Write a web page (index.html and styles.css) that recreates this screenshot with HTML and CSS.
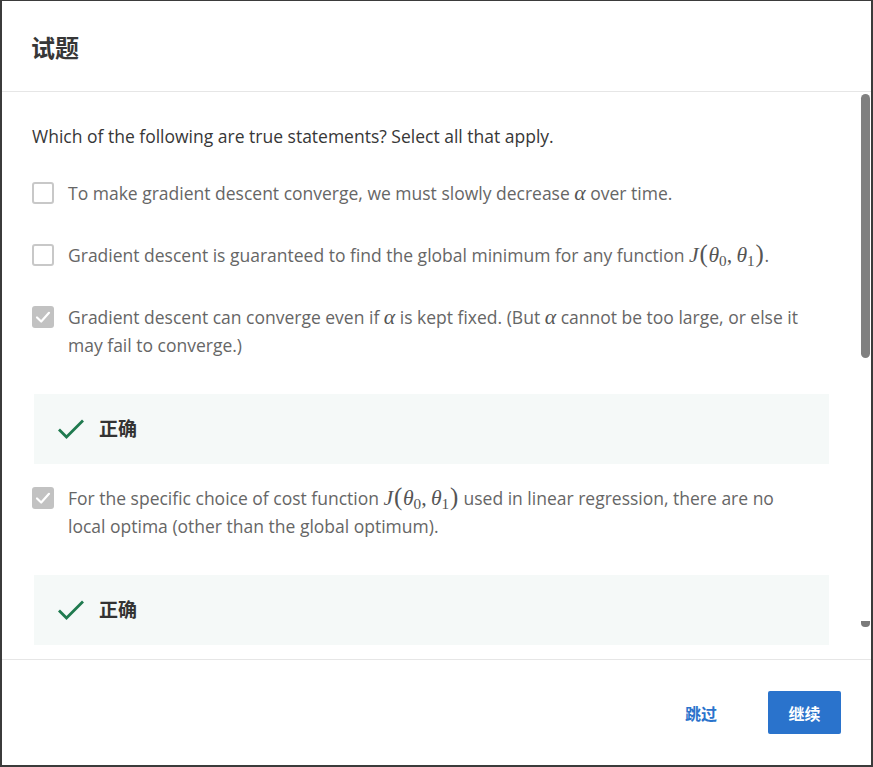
FILE: index.html
```html
<!DOCTYPE html>
<html lang="zh">
<head>
<meta charset="utf-8">
<title>试题</title>
<link rel="stylesheet" href="styles.css">
</head>
<body>
<div class="modal">
  <header class="modal-head">
    <h2 class="title">试题</h2>
  </header>
  <div class="modal-body">
    <div class="scroll">
      <p class="question">Which of the following are true statements? Select all that apply.</p>

      <div class="option">
        <span class="box"></span>
        <div class="opt-text">To make gradient descent converge, we must slowly decrease <span class="math"><i>α</i></span> over time.</div>
      </div>

      <div class="option">
        <span class="box"></span>
        <div class="opt-text">Gradient descent is guaranteed to find the global minimum for any function <span class="math"><i>J</i><span class="paren">(</span><i>θ</i><sub>0</sub>,<i class="th2">θ</i><sub>1</sub><span class="paren">)</span></span>.</div>
      </div>

      <div class="option">
        <span class="box checked"><svg viewBox="0 0 22 22" width="22" height="22"><path d="M5 11.5 L9.2 15.5 L17 6.8" fill="none" stroke="#fff" stroke-width="2.2" stroke-linecap="round" stroke-linejoin="round"/></svg></span>
        <div class="opt-text">Gradient descent can converge even if <span class="math"><i>α</i></span> is kept fixed. (But <span class="math"><i>α</i></span> cannot be too large, or else it may fail to converge.)</div>
      </div>

      <div class="feedback">
        <svg class="ok" viewBox="0 0 28 22" width="28" height="22"><path d="M2 11.5 L9.5 19 L26 2.5" fill="none" stroke="#1f7a4f" stroke-width="2.8"/></svg>
        <span class="ok-text">正确</span>
      </div>

      <div class="option after-fb">
        <span class="box checked"><svg viewBox="0 0 22 22" width="22" height="22"><path d="M5 11.5 L9.2 15.5 L17 6.8" fill="none" stroke="#fff" stroke-width="2.2" stroke-linecap="round" stroke-linejoin="round"/></svg></span>
        <div class="opt-text">For the specific choice of cost function <span class="math"><i>J</i><span class="paren">(</span><i>θ</i><sub>0</sub>,<i class="th2">θ</i><sub>1</sub><span class="paren">)</span></span> used in linear regression, there are no local optima (other than the global optimum).</div>
      </div>

      <div class="feedback">
        <svg class="ok" viewBox="0 0 28 22" width="28" height="22"><path d="M2 11.5 L9.5 19 L26 2.5" fill="none" stroke="#1f7a4f" stroke-width="2.8"/></svg>
        <span class="ok-text">正确</span>
      </div>
    </div>
    <div class="scrollbar">
      <div class="thumb"></div>
      <div class="arrow"></div>
    </div>
  </div>
  <footer class="modal-foot">
    <a class="skip" href="#">跳过</a>
    <button class="next" type="button">继续</button>
  </footer>
</div>
</body>
</html>
```
FILE: styles.css
```css
* { box-sizing: border-box; }

html, body {
  margin: 0;
  padding: 0;
  height: 100%;
  background: #fff;
}

body {
  font-family: "Open Sans", "Noto Sans CJK SC", sans-serif;
  color: #333;
}

.modal {
  height: 767px;
  display: flex;
  flex-direction: column;
  border-style: solid;
  border-color: #3b3b3b;
  border-width: 1px 2px 2px 2px;
  background: #fff;
}

.modal-head {
  height: 91px;
  flex: none;
  display: flex;
  align-items: center;
  padding: 2px 0 0 29px;
  border-bottom: 1px solid #e6e6e6;
}

.title {
  margin: 0;
  font-family: "Noto Sans CJK SC", sans-serif;
  font-size: 24px;
  font-weight: 700;
  color: #373737;
  line-height: 1;
}

.modal-body {
  flex: 1;
  position: relative;
  overflow: hidden;
}

.scroll {
  padding: 32px 42px 0 30px;
}

.question {
  margin: 0 0 31px;
  font-size: 17.5px;
  line-height: 24px;
  color: #373737;
}

.option {
  display: flex;
  align-items: flex-start;
  gap: 14px;
  margin-bottom: 34px;
}

.option.after-fb { margin-top: -15px; }

.box {
  flex: none;
  width: 22px;
  height: 22px;
  margin: 3px 0 0 0;
  border: 2px solid #c8c8c8;
  border-radius: 3px;
  background: #fff;
  position: relative;
}

.box.checked {
  border: none;
  background: #c2c2c2;
}

.box svg { display: block; }

.opt-text {
  font-size: 17.5px;
  line-height: 28px;
  color: #666;
  margin-right: 20px;
}

.math {
  font-family: "Liberation Serif", "DejaVu Serif", serif;
  font-size: 1.24em;
  line-height: 0;
  color: #555;
  white-space: nowrap;
}

.math i { font-style: italic; }

.math sub {
  font-size: 0.7em;
  font-style: normal;
  vertical-align: -0.25em;
}

.math .th2 { margin-left: 0.2em; }

.paren { font-size: 1.15em; margin: 0 0.03em; }

.feedback {
  height: 70px;
  margin: 35px 0 35px 2px;
  background: #f5f9f8;
  display: flex;
  align-items: center;
  padding-left: 23px;
}

.ok { display: block; margin-right: 14px; }

.ok-text {
  font-family: "Noto Sans CJK SC", sans-serif;
  font-size: 19px;
  font-weight: 700;
  line-height: 1;
  color: #333;
  margin-top: -3px;
}

.scrollbar {
  position: absolute;
  top: 0;
  right: 1px;
  bottom: 0;
  width: 9px;
}

.thumb {
  position: absolute;
  top: 2px;
  left: 0;
  width: 9px;
  height: 264px;
  background: #808080;
  border-radius: 5px;
}

.arrow {
  position: absolute;
  top: 529px;
  left: 0;
  width: 9px;
  height: 6px;
  background: #7a7a7a;
  border-radius: 0 0 4px 4px;
}

.modal-foot {
  flex: none;
  height: 106px;
  border-top: 1px solid #e6e6e6;
  display: flex;
  align-items: center;
  justify-content: flex-end;
  padding-right: 30px;
}

.skip {
  font-family: "Noto Sans CJK SC", sans-serif;
  font-size: 16px;
  font-weight: 700;
  color: #2a73cc;
  text-decoration: none;
  margin-right: 51px;
}

.next {
  width: 73px;
  height: 43px;
  border: none;
  border-radius: 2px;
  background: #2a73cc;
  color: #fff;
  font-family: "Noto Sans CJK SC", sans-serif;
  font-size: 16px;
  font-weight: 700;
  padding: 0;
}
```
